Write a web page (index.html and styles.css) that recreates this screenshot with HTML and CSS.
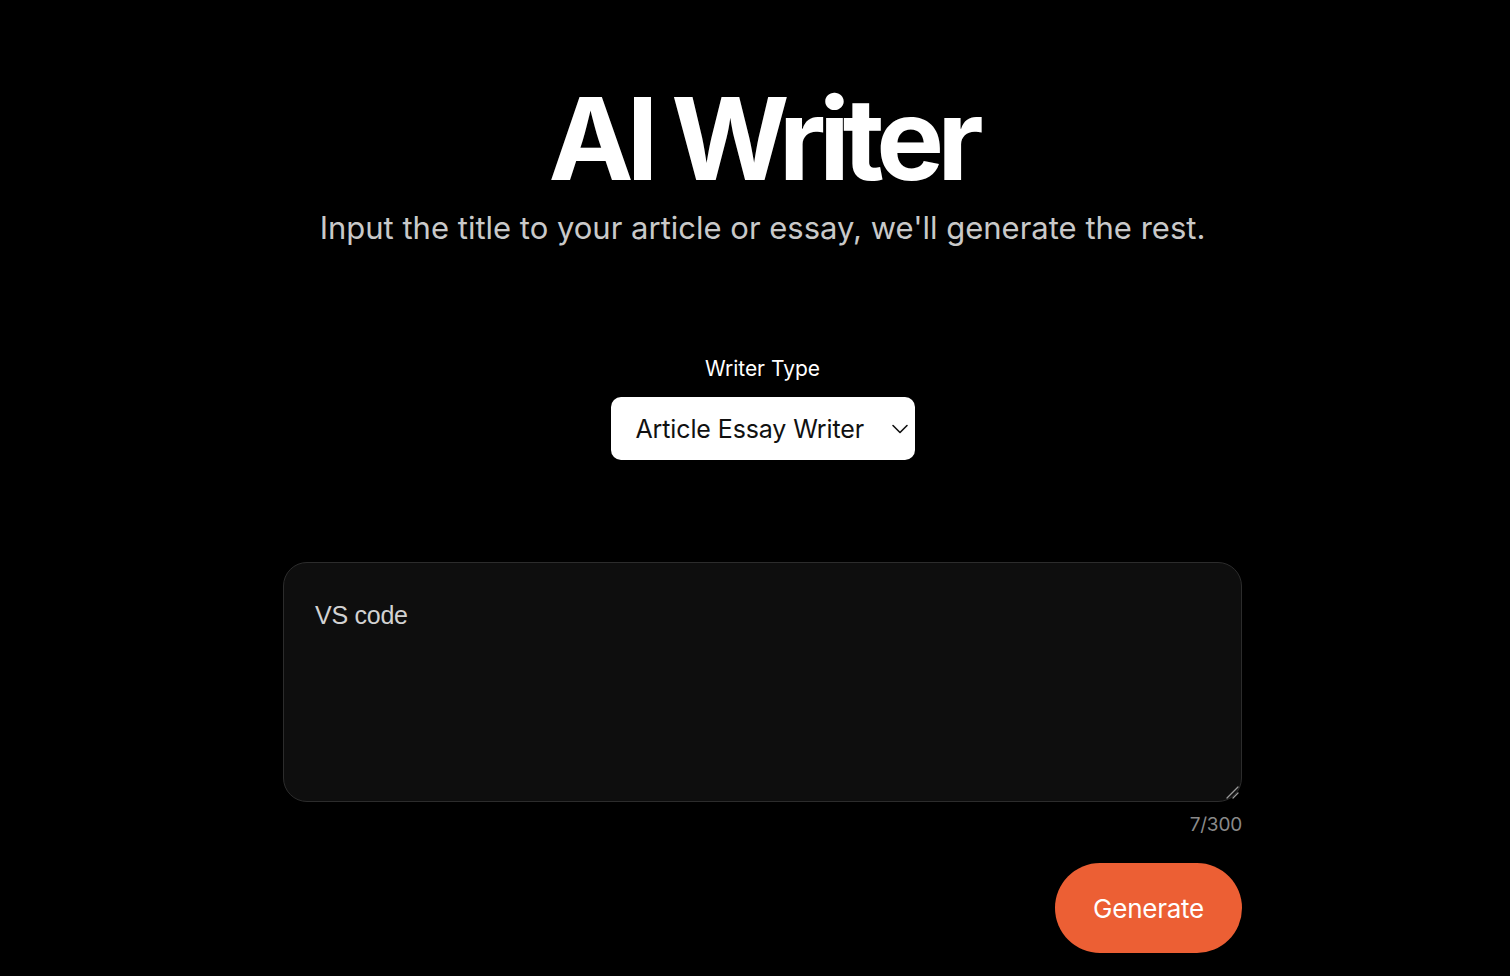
FILE: index.html
```html
<!DOCTYPE html>
<html>
<head>
<meta charset="utf-8">
<link rel="stylesheet" href="styles.css">
</head>
<body>
<main class="page">
  <header class="hero">
    <h1 class="title">AI Writer</h1>
    <p class="subtitle">Input the title to your article or essay, we'll generate the rest.</p>
  </header>
  <section class="type">
    <label class="type-label">Writer Type</label>
    <div class="select">
      <span class="select-text">Article Essay Writer</span>
      <svg class="chev" width="18" height="18" viewBox="0 0 18 18"><path d="M2 5.5 L9 12.5 L16 5.5" fill="none" stroke="#111" stroke-width="1.6" stroke-linecap="round" stroke-linejoin="round"/></svg>
    </div>
  </section>
  <section class="editor">
    <div class="textarea">
      <span class="ta-text">VS code</span>
      <svg class="grip" width="14" height="14" viewBox="0 0 14 14"><path d="M2 13 L13 2 M8 13 L13 8" stroke="#9a9a9a" stroke-width="1.3" stroke-linecap="round"/></svg>
    </div>
    <div class="count">7/300</div>
    <div class="actions"><button class="generate">Generate</button></div>
  </section>
</main>
</body>
</html>
```

FILE: styles.css
```css
html, body {
  margin: 0;
  padding: 0;
  background: #000;
  height: 100%;
  overflow: hidden;
}
body {
  font-family: Inter, "Noto Sans", sans-serif;
  color: #fff;
}
.page {
  display: flex;
  flex-direction: column;
  align-items: center;
  padding-left: 15px;
}
.hero {
  display: flex;
  flex-direction: column;
  align-items: center;
  padding-top: 76px;
}
.title {
  margin: 0;
  font-size: 114px;
  font-weight: 700;
  letter-spacing: -0.062em;
  line-height: 126px;
  color: #fff;
}
.subtitle {
  margin: 6px 0 0;
  font-size: 31px;
  font-weight: 400;
  letter-spacing: 0;
  color: #c9c9c9;
  line-height: 40px;
}
.type {
  display: flex;
  flex-direction: column;
  align-items: center;
  margin-top: 107px;
}
.type-label {
  font-size: 21px;
  letter-spacing: 0;
  line-height: 28px;
  color: #fff;
}
.select {
  margin-top: 14px;
  width: 304px;
  height: 63px;
  box-sizing: border-box;
  background: #fff;
  border-radius: 10px;
  display: flex;
  align-items: center;
  justify-content: space-between;
  padding: 0 6px 0 25px;
}
.select-text {
  font-size: 25px;
  letter-spacing: -0.005em;
  color: #111;
}
.editor {
  margin-top: 102px;
  width: 959px;
  display: flex;
  flex-direction: column;
}
.textarea {
  position: relative;
  height: 240px;
  box-sizing: border-box;
  background: #0e0e0e;
  border: 1px solid #2c2c2c;
  border-radius: 24px;
  padding: 38px 31px;
}
.ta-text {
  font-family: "Liberation Sans", Arial, sans-serif;
  font-size: 25px;
  color: #d2d2d2;
  letter-spacing: -0.01em;
}
.grip {
  position: absolute;
  right: 2px;
  bottom: 2px;
}
.count {
  align-self: flex-end;
  margin-top: 11px;
  font-size: 19px;
  color: #8a8a8a;
  letter-spacing: -0.01em;
}
.actions {
  display: flex;
  justify-content: flex-end;
  margin-top: 27px;
}
.generate {
  width: 187px;
  height: 90px;
  border: none;
  border-radius: 45px;
  background: #ec5f34;
  color: #fff;
  font-family: Inter, "Noto Sans", sans-serif;
  font-size: 26px;
  letter-spacing: -0.01em;
  padding: 0;
}
```
